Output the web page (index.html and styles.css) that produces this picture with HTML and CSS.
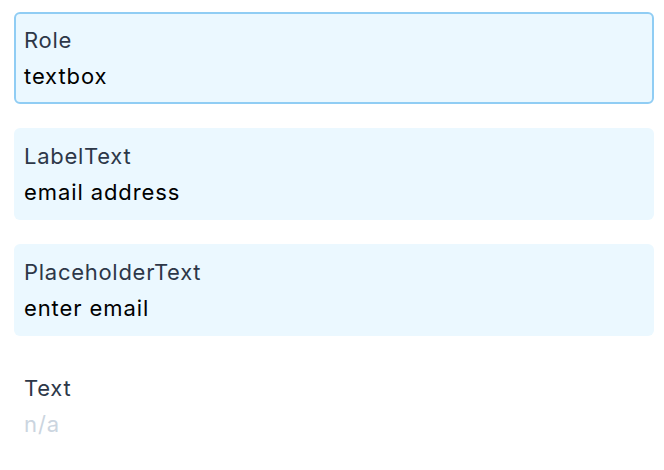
FILE: index.html
```html
<!DOCTYPE html>
<html>
<head>
<meta charset="utf-8">
<link rel="stylesheet" href="styles.css">
</head>
<body>
<div class="list">
  <div class="field field--active">
    <div class="label">Role</div>
    <div class="value">textbox</div>
  </div>
  <div class="field field--filled">
    <div class="label">LabelText</div>
    <div class="value">email address</div>
  </div>
  <div class="field field--filled">
    <div class="label">PlaceholderText</div>
    <div class="value">enter email</div>
  </div>
  <div class="field">
    <div class="label">Text</div>
    <div class="value value--empty">n/a</div>
  </div>
</div>
</body>
</html>
```
FILE: styles.css
```css
html, body {
  margin: 0;
  padding: 0;
  background: #ffffff;
}
body {
  font-family: Inter, "Noto Sans", sans-serif;
  font-size: 22px;
}
.list {
  display: flex;
  flex-direction: column;
  gap: 24px;
  padding: 12px 10px 0 14px;
}
.field {
  border: 2px solid transparent;
  border-radius: 6px;
  padding: 8px 8px;
  line-height: 36px;
}
.field--active {
  background: #ebf8ff;
  border-color: #90cdf4;
}
.field--filled {
  background: #ebf8ff;
}
.label {
  color: #2d3748;
  letter-spacing: 0.72px;
}
.value {
  color: #000000;
  letter-spacing: 0.9px;
}
.value--empty {
  color: #cbd5e0;
}
```
